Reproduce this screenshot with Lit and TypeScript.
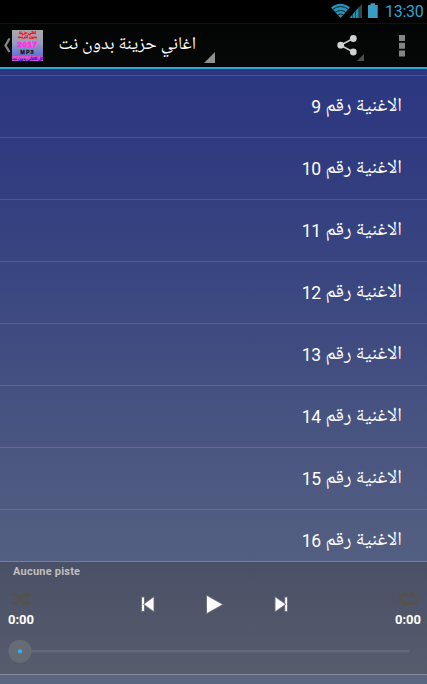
import { LitElement, html, css } from "lit";
import { customElement } from "lit/decorators.js";

const TRACKS = [9, 10, 11, 12, 13, 14, 15, 16];

@customElement("status-bar")
class StatusBar extends LitElement {
  static styles = css`
    :host { display: flex; height: 23px; flex: none; background: #000; justify-content: flex-end; padding-right: 3px; box-sizing: border-box; }
    svg { display: block; flex: none; }
    .time { font: 400 16px/23px Roboto, sans-serif; color: #2fa5d1; margin-left: 6px; letter-spacing: -0.3px; white-space: nowrap; width: 39px; }
  `;
  render() {
    return html`
      <svg width="48" height="23" viewBox="332 0 48 23">
        <path d="M332 7.500Q341.500 0 351 7.500L341.500 18Z" fill="#2a91b7" />
        <path d="M333.500 9.500Q341.500 3.500 349.500 9.500M336 12.500Q341.500 8.500 347 12.500M338.500 15Q341.500 12.800 344.500 15" fill="none" stroke="#06191f" stroke-width=".9" />
        <path d="M350.500 18L363 4V18Z" fill="#434343" />
        <path d="M350.500 18L360 7V18Z" fill="#258eb5" />
        <path d="M353.500 14V18M356.500 10V18M359.800 6V18" stroke="#0b3342" stroke-width=".7" />
        <path d="M369 5H371.500V3.300H376V5H378.700V18H369Z" fill="#3b9cc3" />
      </svg>
      <span class="time">13:30</span>
    `;
  }
}

@customElement("action-bar")
class ActionBar extends LitElement {
  static styles = css`
    :host { display: flex; flex: none; height: 46px; box-sizing: border-box; background: linear-gradient(#111 0, #111 1px, #030404 1px, #060707); border-bottom: 2px solid #2fa9d6; align-items: flex-start; }
    svg { display: block; flex: none; }
    .back { margin: 15px 1px 0 4px; }
    .logo { width: 31px; height: 31px; margin-top: 7px; background: linear-gradient(#aaa 0, #9a9dbd 40%, #6275d6 83%, #e052c4 84%); display: flex; flex-direction: column; align-items: center; overflow: hidden; font-family: "Liberation Sans", sans-serif; font-weight: 700; white-space: nowrap; }
    .red { color: #f01622; font-size: 4px; line-height: 4px; margin-top: 1px; -webkit-text-stroke: .2px #f01622; }
    .red + .red { margin-top: 0; }
    .year { color: #ff35e5; font-size: 8px; line-height: 8px; margin-top: 2px; -webkit-text-stroke: .8px #ff35e5; letter-spacing: .6px; }
    .mp { color: #202030; font-size: 5.500px; line-height: 6px; -webkit-text-stroke: .4px #202030; letter-spacing: 1px; }
    .foot { color: #3221ef; font-size: 4px; line-height: 5px; margin-top: 1px; -webkit-text-stroke: .1px #3221ef; }
    .title { margin: 8px 0 0 14px; width: 139px; direction: rtl; color: #fff; font: 18px/29px "Noto Naskh Arabic", "Noto Sans Arabic", "DejaVu Sans", sans-serif; white-space: nowrap; }
    .corner { margin: 29px 0 0 8px; }
    .share { margin: 10px 0 0 122px; }
    .menu { margin: 12px 0 0 34px; }
  `;
  render() {
    return html`
      <svg class="back" width="7" height="15" viewBox="0 0 7 15"><path d="M5.500 .5L1.500 7.500L5.500 14" fill="none" stroke="#858585" stroke-width="2.300" /></svg>
      <div class="logo" dir="rtl">
        <span class="red">اغاني حزينة</span><span class="red">بدون انترنت</span>
        <span class="year">2017</span><span class="mp">MP3</span><span class="foot">كل الاغاني بدون نت</span>
      </div>
      <div class="title">اغاني حزينة بدون نت</div>
      <svg class="corner" width="11" height="11" viewBox="0 0 11 11"><path d="M11 0V11H0Z" fill="#909090" /></svg>
      <svg class="share" width="28" height="28" viewBox="337 33 28 28">
        <path d="M353.300 38.500L340.500 45.200L353.300 52" fill="none" stroke="#c9c9c9" stroke-width="1.600" />
        <g fill="#d0d0d0"><circle cx="353.300" cy="38.500" r="3.400" /><circle cx="340.700" cy="45.200" r="3.400" /><circle cx="353.300" cy="52" r="3.400" /></g>
        <path d="M364 54V61H357Z" fill="#4e4e4e" />
      </svg>
      <svg class="menu" width="6" height="22" viewBox="0 0 6 22"><path d="M0 0H6V6H0ZM0 7.700H6V13.700H0ZM0 15.400H6V21.400H0Z" fill="#858585" /></svg>
    `;
  }
}

@customElement("track-list")
class TrackList extends LitElement {
  static styles = css`
    :host { display: block; flex: 1; min-height: 0; overflow: hidden; padding-top: 6px; box-sizing: border-box; }
    .row { height: 62px; box-sizing: border-box; border-top: 1px solid rgba(255, 255, 255, .13); direction: rtl; display: flex; padding: 16px 25px 0 0; color: #fff; white-space: nowrap; }
    .name { font: 19.500px/30px "Noto Naskh Arabic", "Noto Sans Arabic", "DejaVu Sans", sans-serif; width: 76px; }
    .num { font: 17.500px/30px Roboto, sans-serif; margin-right: 5.500px; letter-spacing: -.5px; }
  `;
  render() {
    return TRACKS.map((n) => html`<div class="row"><span class="name">الاغنية رقم</span><span class="num">${n}</span></div>`);
  }
}

@customElement("player-panel")
class PlayerPanel extends LitElement {
  static styles = css`
    :host { display: flex; flex-direction: column; flex: none; height: 114px; margin-bottom: 9px; box-sizing: border-box; border-top: 1px solid #787f92; border-bottom: 1px solid #858b9d; background: linear-gradient(#4a5066, #575c6d); font-family: Roboto, sans-serif; color: #fff; }
    svg { display: block; flex: none; }
    .track { font: 700 11px/14px Roboto, sans-serif; color: #bfbfbf; margin: 3px 0 0 13px; height: 14px; letter-spacing: .22px; }
    .controls { overflow: visible; }
    .times { display: flex; justify-content: space-between; font: 700 13px/16px Roboto, sans-serif; padding: 0 6px 0 8px; height: 16px; margin-top: 1px; }
    .seek { margin-top: 9px; }
  `;
  render() {
    return html`
      <div class="track">Aucune piste</div>
      <svg class="controls" width="427" height="32" viewBox="0 579 427 32">
        <g fill="none" stroke="#565249" stroke-width="2.300">
          <path d="M11 594.500H15C20 594.500 20 603 26 603H28M11 603H15C20 603 20 594.500 26 594.500H28" />
          <path d="M400.500 601V597.500Q400.500 595 403 595H412M416 598V601.500Q416 603.500 413.500 603.500H403" />
        </g>
        <path d="M26.500 591L31 594.500L26.500 598ZM26.500 599.500L31 603L26.500 606.500ZM411 591L415.500 595L411 599ZM405 599.500L400.500 603.500L405 607Z" fill="#565249" />
        <g fill="#fff" stroke="#777b84" stroke-width="1.600" paint-order="stroke">
          <path d="M142 597.500H144V611H142Z" /><path d="M153.500 597.500V611L144.200 604.300Z" />
          <path d="M207 596L222 604.500L207 613Z" />
          <path d="M285.200 597.500H287V611H285.200Z" /><path d="M275.500 597.500V611L285 604.300Z" />
        </g>
      </svg>
      <div class="times"><span>0:00</span><span>0:00</span></div>
      <svg class="seek" width="427" height="28" viewBox="0 637 427 28">
        <path d="M20 651.300H409" stroke="#62677a" stroke-width="2.600" />
        <circle cx="20" cy="651.300" r="11.600" fill="#666b74" /><circle cx="20" cy="651.300" r="2.100" fill="#33b5e5" />
      </svg>
    `;
  }
}

@customElement("app-root")
class AppRoot extends LitElement {
  static styles = css`
    :host { display: flex; flex-direction: column; width: 427px; height: 684px; overflow: hidden; background: linear-gradient(#2b3780 69px, #303b80 150px, #3c4880 300px, #4a5680 450px, #535f81 561px, #5b6680 684px); }
  `;
  render() {
    return html`<status-bar></status-bar><action-bar></action-bar><track-list></track-list><player-panel></player-panel>`;
  }
}
